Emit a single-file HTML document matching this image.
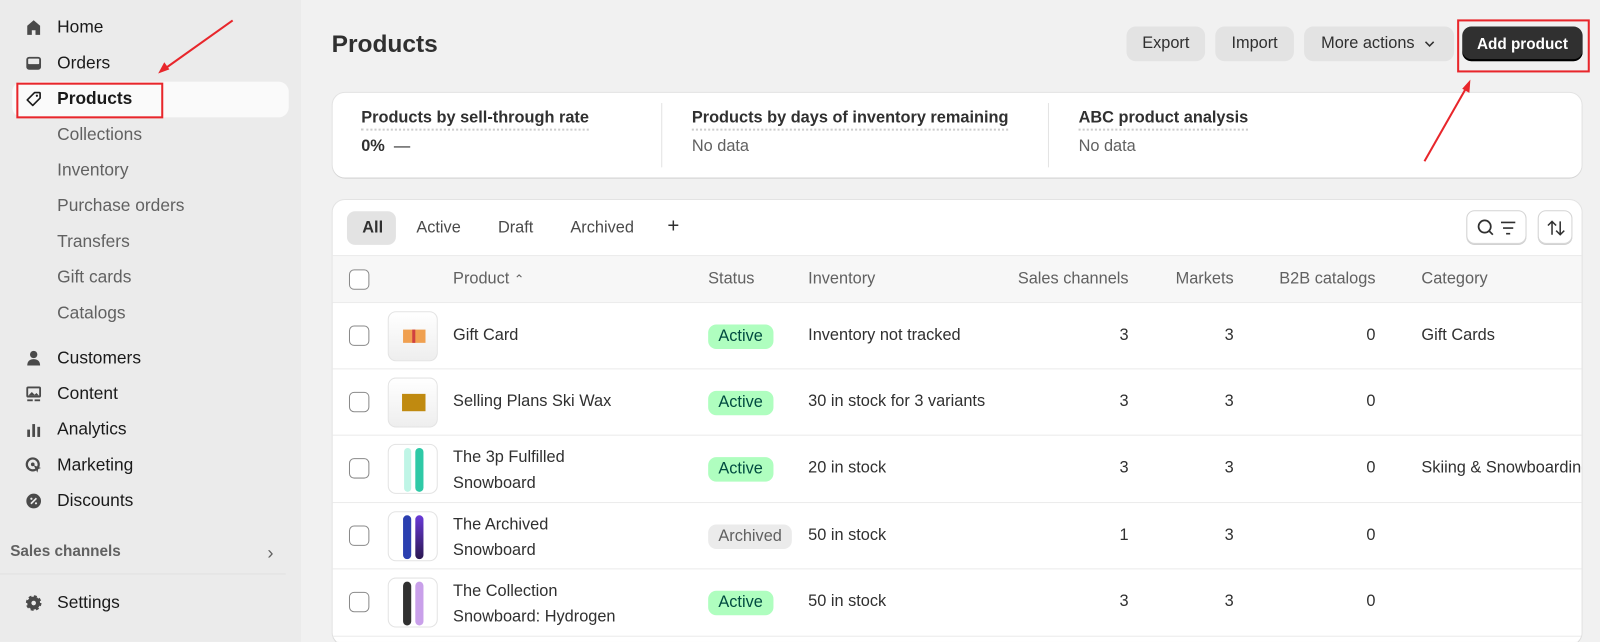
<!DOCTYPE html>
<html style="overflow:hidden;height:642px"><head><meta charset="utf-8"><style>
*{box-sizing:border-box;margin:0;padding:0}
body{width:1600px;height:642px;overflow:hidden;background:#f1f1f1;font-family:"Liberation Sans",sans-serif;color:#303030;font-size:16px;position:relative}
#w{position:absolute;left:0;top:0;width:1568px;height:629px;overflow:hidden;transform:scale(1.0204);transform-origin:0 0}
.side{position:absolute;left:0;top:0;width:295px;height:629px;background:#ebebeb}
.nav{position:absolute;left:24px;font-size:17px;color:#1a1a1a;display:flex;align-items:center}
.nav svg{width:18px;height:18px;margin-right:14px}
.sub{position:absolute;left:56px;font-size:17px;color:#616161}
.main{position:absolute;left:295px;top:0;right:0;bottom:0}
.btn{position:absolute;top:26px;height:34px;border-radius:9px;background:#e3e3e3;font-size:16px;color:#303030;display:flex;align-items:center;justify-content:center}
.card{position:absolute;background:#fff;border-radius:12px;box-shadow:0 1px 0 #d4d4d4,0 0 0 1px #e3e3e3}
.stat{position:absolute;top:16px}
.stat b{font-size:16px;color:#303030;border-bottom:2px dotted #ccc;padding-bottom:2px}
.stat div{margin-top:10px;color:#616161;font-size:16px}
.t{position:absolute;font-size:16px}
.cb{position:absolute;left:16px;width:20px;height:20px;border:1.5px solid #8a8a8a;border-radius:5px;background:#fff}
.th{position:absolute;left:54px;width:49px;height:49px;border:1px solid #e3e3e3;border-radius:8px;background:#fff;overflow:hidden}
.row{position:absolute;left:0;right:0;height:65px;border-top:1px solid #ebebeb}
.row>.t{top:23px}
.badge{position:absolute;left:368px;top:21px;height:24px;padding:0 10px;border-radius:8px;background:#affebf;color:#014b40;font-size:16px;line-height:24px}
.n{position:absolute;text-align:right;width:40px}
</style></head><body><div id="w">
<div class="side">
<div class="nav" style="top:17px"><svg viewBox="0 0 20 20"><path d="M10 2 3 8v10h5v-5h4v5h5V8z" fill="#4a4a4a"/></svg>Home</div>
<div class="nav" style="top:52px"><svg viewBox="0 0 20 20"><rect x="2" y="3" width="16" height="14" rx="3" fill="#4a4a4a"/><rect x="4" y="5" width="12" height="6" rx="1" fill="#ebebeb"/></svg>Orders</div>
<div style="position:absolute;left:12px;top:80px;width:271px;height:35px;background:#fafafa;border-radius:10px"></div>
<div class="nav" style="top:87px;font-weight:bold"><svg viewBox="0 0 20 20"><path d="M11 3h5a1 1 0 0 1 1 1v5l-8 8-6-6z" fill="none" stroke="#1a1a1a" stroke-width="1.8" stroke-linejoin="round"/><circle cx="13.5" cy="6.5" r="1.2" fill="#1a1a1a"/></svg>Products</div>
<div class="sub" style="top:122px">Collections</div>
<div class="sub" style="top:157px">Inventory</div>
<div class="sub" style="top:192px">Purchase orders</div>
<div class="sub" style="top:227px">Transfers</div>
<div class="sub" style="top:262px">Gift cards</div>
<div class="sub" style="top:297px">Catalogs</div>
<div class="nav" style="top:341px"><svg viewBox="0 0 20 20"><circle cx="10" cy="6" r="4" fill="#4a4a4a"/><path d="M3 18c0-5 3-7 7-7s7 2 7 7z" fill="#4a4a4a"/></svg>Customers</div>
<div class="nav" style="top:376px"><svg viewBox="0 0 20 20"><rect x="2" y="2" width="16" height="12" rx="2" fill="#4a4a4a"/><rect x="4" y="4" width="12" height="8" fill="#ebebeb"/><path d="M4 12l4-4 3 3 2-2 3 3z" fill="#4a4a4a"/><rect x="3" y="16" width="6" height="2" fill="#4a4a4a"/><rect x="11" y="16" width="6" height="2" fill="#4a4a4a"/></svg>Content</div>
<div class="nav" style="top:411px"><svg viewBox="0 0 20 20"><rect x="3" y="10" width="3" height="8" fill="#4a4a4a"/><rect x="8.5" y="4" width="3" height="14" fill="#4a4a4a"/><rect x="14" y="7" width="3" height="11" fill="#4a4a4a"/></svg>Analytics</div>
<div class="nav" style="top:446px"><svg viewBox="0 0 20 20"><circle cx="9" cy="9" r="6.5" fill="none" stroke="#4a4a4a" stroke-width="2.4"/><circle cx="9" cy="9" r="2" fill="#4a4a4a"/><path d="M10 10l8 3-3 1-1 4z" fill="#4a4a4a"/></svg>Marketing</div>
<div class="nav" style="top:481px"><svg viewBox="0 0 20 20"><circle cx="10" cy="10" r="8" fill="#4a4a4a"/><path d="M7 13l6-6" stroke="#ebebeb" stroke-width="1.8"/><circle cx="7.5" cy="7.5" r="1.2" fill="#ebebeb"/><circle cx="12.5" cy="12.5" r="1.2" fill="#ebebeb"/></svg>Discounts</div>
<div style="position:absolute;left:10px;top:532px;font-size:15px;font-weight:bold;color:#616161">Sales channels</div>
<div style="position:absolute;left:262px;top:532px;font-size:18px;color:#616161">›</div>
<div style="position:absolute;left:0;top:562px;width:280px;height:1px;background:#e0e0e0"></div>
<div class="nav" style="top:581px"><svg viewBox="0 0 20 20"><circle cx="10" cy="10" r="7" fill="#4a4a4a" stroke="#4a4a4a" stroke-width="3" stroke-dasharray="3 2.5"/><circle cx="10" cy="10" r="2.5" fill="#ebebeb"/></svg>Settings</div>
</div>

<div class="main">
<div style="position:absolute;left:30px;top:30px;font-size:24px;font-weight:bold;color:#303030">Products</div>
<div class="btn" style="left:809px;width:77px">Export</div>
<div class="btn" style="left:896px;width:77px">Import</div>
<div class="btn" style="left:983px;width:147px">More actions<svg width="14" height="14" viewBox="0 0 14 14" style="margin-left:8px"><path d="M3 5l4 4 4-4" fill="none" stroke="#303030" stroke-width="1.5"/></svg></div>
<div class="btn" style="left:1138px;width:118px;background:#303030;color:#fff;font-weight:bold;font-size:15px;box-shadow:inset 0 -2px 0 #000">Add product</div>

<div class="card" style="left:31px;top:91px;width:1224px;height:83px">
<div class="stat" style="left:28px"><b>Products by sell-through rate</b><div style="color:#303030;font-weight:bold">0% <span style="font-weight:normal">&nbsp;—</span></div></div>
<div style="position:absolute;left:322px;top:10px;width:1px;height:63px;background:#e3e3e3"></div>
<div class="stat" style="left:352px"><b>Products by days of inventory remaining</b><div>No data</div></div>
<div style="position:absolute;left:701px;top:10px;width:1px;height:63px;background:#e3e3e3"></div>
<div class="stat" style="left:731px"><b>ABC product analysis</b><div>No data</div></div>
</div>

<div class="card" style="left:31px;top:196px;width:1224px;height:436px;overflow:hidden">
<div style="position:absolute;left:14px;top:11px;width:48px;height:33px;border-radius:8px;background:#e3e3e3"></div>
<div class="t" style="left:29px;top:19px;font-weight:bold">All</div>
<div class="t" style="left:82px;top:19px;color:#4a4a4a">Active</div>
<div class="t" style="left:162px;top:19px;color:#4a4a4a">Draft</div>
<div class="t" style="left:233px;top:19px;color:#4a4a4a">Archived</div>
<div class="t" style="left:328px;top:15px;font-size:20px;color:#303030">+</div>
<div style="position:absolute;left:1111px;top:10px;width:59px;height:33px;border-radius:8px;border:1px solid #d4d4d4;box-shadow:0 1px 0 #ccc"><svg width="59" height="33"><circle cx="17" cy="15" r="6" fill="none" stroke="#303030" stroke-width="1.7"/><path d="M21 19l4 4" stroke="#303030" stroke-width="1.7"/><path d="M33 11h14M35 16.5h10M38 22h4" stroke="#303030" stroke-width="1.6"/></svg></div>
<div style="position:absolute;left:1181px;top:10px;width:34px;height:33px;border-radius:8px;border:1px solid #d4d4d4;box-shadow:0 1px 0 #ccc"><svg width="34" height="33"><path d="M13 23V10M9 14l4-4 4 4M21 10v13M17 19l4 4 4-4" fill="none" stroke="#303030" stroke-width="1.5"/></svg></div>

<div style="position:absolute;left:0;right:0;top:54px;height:46px;background:#f7f7f7;border-top:1px solid #ebebeb;color:#616161">
<div class="cb" style="top:13px"></div>
<div class="t" style="left:118px;top:14px">Product <span style="font-size:12px">⌃</span></div>
<div class="t" style="left:368px;top:14px">Status</div>
<div class="t" style="left:466px;top:14px">Inventory</div>
<div class="t" style="right:444px;top:14px">Sales channels</div>
<div class="t" style="right:341px;top:14px">Markets</div>
<div class="t" style="right:202px;top:14px">B2B catalogs</div>
<div class="t" style="left:1067px;top:14px">Category</div>
</div>

<div class="row" style="top:100px"><div class="cb" style="top:22px"></div><div class="th" style="top:8px;background:linear-gradient(#fff,#eee)"><div style="position:absolute;left:14px;top:17px;width:22px;height:13px;background:#f0a050"></div><div style="position:absolute;left:23px;top:17px;width:3px;height:13px;background:#d04040"></div></div><div class="t" style="left:118px">Gift Card</div><div class="badge">Active</div><div class="t" style="left:466px">Inventory not tracked</div><div class="n t" style="left:740px">3</div><div class="n t" style="left:843px">3</div><div class="n t" style="left:982px">0</div><div class="t" style="left:1067px">Gift Cards</div></div>

<div class="row" style="top:165px"><div class="cb" style="top:22px"></div><div class="th" style="top:8px;background:linear-gradient(#fff,#eee)"><div style="position:absolute;left:13px;top:15px;width:23px;height:17px;background:#c08a10"></div></div><div class="t" style="left:118px">Selling Plans Ski Wax</div><div class="badge">Active</div><div class="t" style="left:466px">30 in stock for 3 variants</div><div class="n t" style="left:740px">3</div><div class="n t" style="left:843px">3</div><div class="n t" style="left:982px">0</div></div>

<div class="row" style="top:230px"><div class="cb" style="top:22px"></div><div class="th" style="top:8px"><div style="position:absolute;left:15px;top:3px;width:7px;height:43px;border-radius:4px;background:#bff5e6"></div><div style="position:absolute;left:26px;top:3px;width:8px;height:43px;border-radius:4px;background:#2ec9a6"></div></div><div class="t" style="left:118px;top:9px!important;line-height:25px">The 3p Fulfilled<br>Snowboard</div><div class="badge">Active</div><div class="t" style="left:466px">20 in stock</div><div class="n t" style="left:740px">3</div><div class="n t" style="left:843px">3</div><div class="n t" style="left:982px">0</div><div class="t" style="left:1067px;white-space:nowrap">Skiing &amp; Snowboarding</div></div>

<div class="row" style="top:296px"><div class="cb" style="top:22px"></div><div class="th" style="top:8px"><div style="position:absolute;left:14px;top:3px;width:8px;height:43px;border-radius:4px;background:#2b3fb0"></div><div style="position:absolute;left:26px;top:3px;width:8px;height:43px;border-radius:4px;background:linear-gradient(#6a3ad8,#2a1850)"></div></div><div class="t" style="left:118px;top:9px!important;line-height:25px">The Archived<br>Snowboard</div><div class="badge" style="background:#ebebeb;color:#616161">Archived</div><div class="t" style="left:466px">50 in stock</div><div class="n t" style="left:740px">1</div><div class="n t" style="left:843px">3</div><div class="n t" style="left:982px">0</div></div>

<div class="row" style="top:361px"><div class="cb" style="top:22px"></div><div class="th" style="top:8px"><div style="position:absolute;left:14px;top:3px;width:8px;height:43px;border-radius:4px;background:#303030"></div><div style="position:absolute;left:26px;top:3px;width:8px;height:43px;border-radius:4px;background:#c9a0ea"></div></div><div class="t" style="left:118px;top:9px!important;line-height:25px">The Collection<br>Snowboard: Hydrogen</div><div class="badge">Active</div><div class="t" style="left:466px">50 in stock</div><div class="n t" style="left:740px">3</div><div class="n t" style="left:843px">3</div><div class="n t" style="left:982px">0</div></div>
<div style="position:absolute;left:0;right:0;top:427px;height:1px;background:#ebebeb"></div>
</div>
</div>

<div style="position:absolute;left:16px;top:81px;width:144px;height:35px;border:2px solid #e8262b"></div>
<div style="position:absolute;left:1428px;top:19px;width:130px;height:52px;border:2px solid #e8262b"></div>
<svg style="position:absolute;left:0;top:0" width="1568" height="629">
<path d="M228 20L162 67" stroke="#e8262b" stroke-width="2"/><path d="M155 72l6-11 5 7z" fill="#e8262b"/>
<path d="M1396 158L1437 86" stroke="#e8262b" stroke-width="2"/><path d="M1441 78l-1 13-7-4z" fill="#e8262b"/>
</svg>
</div></body></html>
